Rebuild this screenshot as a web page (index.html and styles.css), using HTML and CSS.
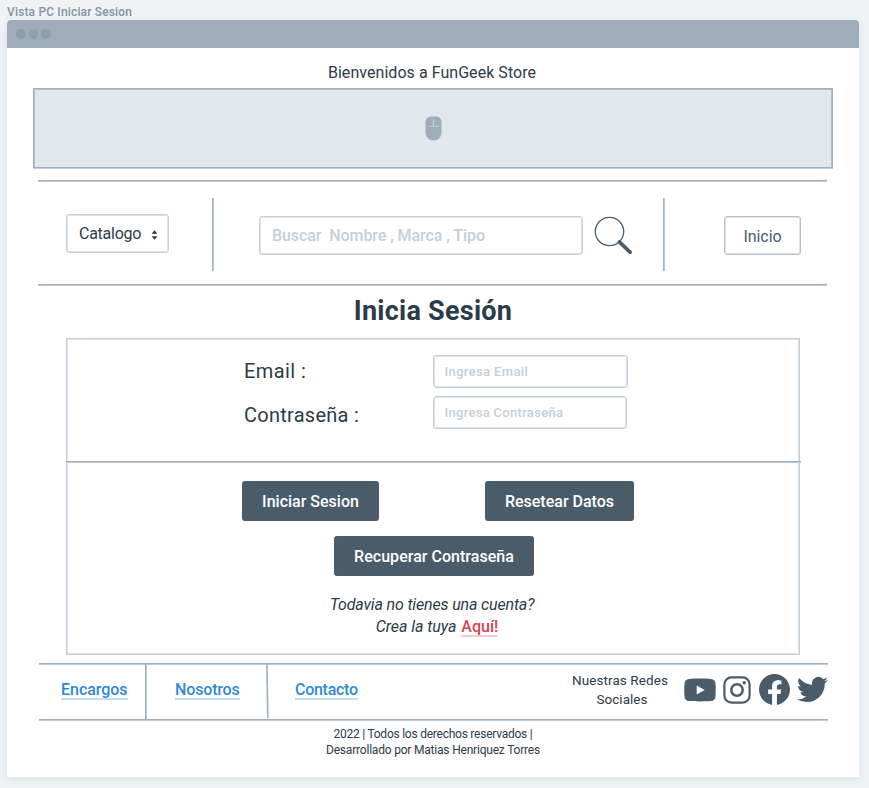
FILE: index.html
```
<!DOCTYPE html>
<html lang="es">
<head>
<meta charset="utf-8">
<title>Vista PC Iniciar Sesion</title>
<link rel="stylesheet" href="styles.css">
</head>
<body>
<div class="frame-title">Vista PC Iniciar Sesion</div>
<div class="window">
  <div class="titlebar"><i></i><i></i><i></i></div>
  <p class="welcome">Bienvenidos a FunGeek Store</p>
  <div class="banner">
    <svg width="17" height="25" viewBox="0 0 17 25"><path fill="#9eadb9" d="M6 .5h5a5.500 5.500 0 0 1 5.500 5.500v10.500a8 8 0 0 1-16 0V6A5.500 5.500 0 0 1 6 .5z"/><path d="M2.500 10.300h11.500M8.500 3v7" stroke="#c3cfd9" fill="none"/></svg>
  </div>
  <nav class="nav">
    <div class="select"><span>Catalogo</span><svg width="7" height="10" viewBox="0 0 7 10"><path fill="#2c3b48" d="M3.500.3 6.400 3.800H.6zM3.500 9.700 6.400 6.200H.6z"/></svg></div>
    <div class="rule rule-left"></div>
    <div class="search">Buscar&nbsp; Nombre , Marca , Tipo</div>
    <svg class="lens" width="38" height="38" viewBox="0 0 38 38" fill="none" stroke="#4a5c6a"><circle cx="15.500" cy="15.500" r="14.200" stroke-width="1.300"/><path d="M25.500 26 36 36.200" stroke-width="3.800" stroke-linecap="round"/></svg>
    <div class="rule rule-right"></div>
    <div class="home">Inicio</div>
  </nav>
  <h1>Inicia Sesión</h1>
  <section class="panel">
    <div class="fields">
      <label>Email :</label><div class="field">Ingresa Email</div>
      <label>Contraseña :</label><div class="field field-pass">Ingresa Contraseña</div>
    </div>
    <div class="actions">
      <div class="row">
        <div class="btn login">Iniciar Sesion</div>
        <div class="btn reset">Resetear Datos</div>
      </div>
      <div class="btn recover">Recuperar Contraseña</div>
      <p class="signup"><span class="ask">Todavia no tienes una cuenta?</span><br><span class="create">Crea la tuya</span> <a>Aquí!</a></p>
    </div>
  </section>
  <footer class="footer">
    <div class="cell cell-1"><a>Encargos</a></div>
    <div class="cell cell-2"><a>Nosotros</a><svg width="4" height="54" viewBox="0 0 4 54"><path d="M1.900 0 2.800 54" stroke="#a5b3c0" stroke-width="1.700"/></svg></div>
    <div class="cell cell-3"><a>Contacto</a></div>
    <p class="social-label"><span>Nuestras Redes</span><br><span class="l2">Sociales</span></p>
    <div class="social">
      <svg class="yt" width="32" height="24" viewBox="0 0 32 24"><path fill="#4a5c6a" fill-rule="evenodd" d="M5 .9C10 .4 22 .4 27 .9c3 .3 4.200 1.900 4.500 4.600.3 4 .3 9 0 13-.3 2.700-1.500 4.300-4.500 4.600-5 .4-17 .4-22 0-3-.3-4.200-1.900-4.500-4.600-.3-4-.3-9 0-13C.8 2.800 2 1.200 5 .9zM12.700 7.500v9l8-4.500z"/></svg>
      <svg class="ig" width="28" height="28" viewBox="0 0 28 28" fill="none" stroke="#4a5c6a"><rect x="1.400" y="1.400" width="25.200" height="25.200" rx="7" stroke-width="2.200"/><circle cx="14" cy="14" r="5.700" stroke-width="2.500"/><circle cx="21.200" cy="6.800" r="1.700" fill="#4a5c6a" stroke="none"/></svg>
      <svg class="fb" width="31" height="31" viewBox="0 0 24 24"><path fill="#4a5c6a" d="M24 12.073c0-6.627-5.373-12-12-12s-12 5.373-12 12c0 5.990 4.388 10.954 10.125 11.854v-8.385H7.078v-3.470h3.047V9.430c0-3.007 1.792-4.669 4.533-4.669 1.312 0 2.686.235 2.686.235v2.953H15.830c-1.491 0-1.956.925-1.956 1.874v2.250h3.328l-.532 3.470h-2.796v8.385C19.612 23.027 24 18.062 24 12.073z"/></svg>
      <svg class="tw" width="31" height="31" viewBox="0 0 24 24"><path fill="#4a5c6a" d="M23.953 4.570a10 10 0 01-2.825.775 4.958 4.958 0 002.163-2.723c-.951.555-2.005.959-3.127 1.184a4.920 4.920 0 00-8.384 4.482C7.690 8.095 4.067 6.130 1.640 3.162a4.822 4.822 0 00-.666 2.475c0 1.710.870 3.213 2.188 4.096a4.904 4.904 0 01-2.228-.616v.060a4.923 4.923 0 003.946 4.827 4.996 4.996 0 01-2.212.085 4.936 4.936 0 004.604 3.417 9.867 9.867 0 01-6.102 2.105c-.390 0-.779-.023-1.170-.067a13.995 13.995 0 007.557 2.209c9.053 0 13.998-7.496 13.998-13.985 0-.210 0-.420-.015-.630A9.935 9.935 0 0024 4.590z"/></svg>
    </div>
  </footer>
  <p class="legal"><span class="rights">2022 | Todos los derechos reservados |</span><br><span>Desarrollado por Matias Henriquez Torres</span></p>
</div>
</body>
</html>
```
FILE: styles.css
```
* { box-sizing: border-box; }
body {
  margin: 0;
  padding-left: 7px;
  height: 788px;
  overflow: hidden;
  background: #eff3f6;
  color: #2c3b48;
  font: 400 16px/20px Roboto, sans-serif;
  white-space: nowrap;
}
p, h1 { margin: 0; }
svg { display: block; flex: none; }

.frame-title {
  height: 20px;
  padding-top: 2px;
  font-size: 12px;
  font-weight: 500;
  letter-spacing: .16px;
  color: #8293a2;
}
.window {
  width: 852px;
  height: 757px;
  background: #fff;
  border-radius: 4px 4px 0 0;
  box-shadow: 0 2px 8px rgba(60, 90, 110, .12);
}
.titlebar {
  display: flex;
  align-items: center;
  gap: 3px;
  height: 28px;
  padding-left: 9px;
  background: #9eadb9;
  border-radius: 4px 4px 0 0;
}
.titlebar i { width: 9.700px; height: 9.700px; border-radius: 50%; background: #8d9eac; }
.welcome { height: 40px; padding: 15px 2px 0 0; text-align: center; letter-spacing: .05px; }
.banner {
  display: flex;
  align-items: center;
  justify-content: center;
  height: 80px;
  margin: 0 26px;
  border: 1px solid #9fafbd;
  box-shadow: inset 1px 1px #b1bfcb, inset -1px 0 #b1bfcb, 0 1px #c3cdd6;
  background: #e2e7eb;
}

.nav {
  display: flex;
  align-items: flex-start;
  width: 789px;
  height: 105px;
  margin: 12px 0 0 31px;
  padding: 17px 0 0 28px;
  border: solid #a0b0be;
  border-width: 1px 0;
  box-shadow: inset 0 1px #bcc8d2, 0 1px #bcc8d2;
}
.select, .search, .home, .field {
  border: 1px solid #c6d0da;
  border-radius: 3px;
  box-shadow: inset 0 0 0 1px #dde4e9;
}
.select {
  display: flex;
  align-items: center;
  justify-content: space-between;
  width: 103px;
  height: 39px;
  margin-top: 16px;
  padding: 1px 10px 0 12px;
}
.select span { letter-spacing: -.25px; }
.select svg { margin-top: 1px; }
.rule { width: 2px; height: 73px; background: linear-gradient(90deg, #a0b0be 50%, #bcc8d2 50%); }
.rule-left { margin-left: 43px; }
.search {
  width: 324px;
  height: 39px;
  margin: 18px 11px 0 45px;
  padding: 9px 0 0 12px;
  font-weight: 500;
  letter-spacing: -.07px;
  color: #c3cfd9;
}
.lens { margin-top: 18px; }
.rule-right { margin-left: 31px; }
.home {
  width: 77px;
  height: 39px;
  margin: 18px 0 0 59px;
  padding-top: 10px;
  border-color: #b5c0ca;
  text-align: center;
  letter-spacing: -.08px;
  color: #4a5c6a;
}

h1 {
  height: 53px;
  padding: 16px 0 0 0;
  text-align: center;
  font-size: 27px;
  line-height: 20px;
  letter-spacing: .24px;
}
.panel {
  width: 734px;
  height: 317px;
  margin-left: 59px;
  border: 1px solid #c3ced8;
  box-shadow: inset 0 0 0 1px #dde4e9;
}
.fields {
  display: grid;
  grid-template-columns: 189px 195px;
  row-gap: 8px;
  width: 735px;
  height: 123px;
  padding: 16px 0 0 178px;
  margin-left: -1px;
  align-content: start;
  border-bottom: 1px solid #a0b0be;
  box-shadow: 0 1px #bcc8d2;
}
.fields label { padding-top: 6px; font-size: 20px; letter-spacing: .42px; }
.fields label:nth-of-type(2) { padding-top: 9px; letter-spacing: .26px; }
.field {
  height: 33px;
  padding: 6px 0 0 10.500px;
  font-size: 13px;
  font-weight: 500;
  letter-spacing: .36px;
  color: #c3cfd9;
}
.field-pass { width: 194px; letter-spacing: .3px; }
.actions { padding: 19px 0 0 175px; }
.row { display: flex; gap: 106px; }
.btn {
  height: 39.500px;
  padding-top: 10.500px;
  border-radius: 3px;
  background: #4a5c6a;
  color: #fff;
  font-weight: 500;
  text-align: center;
}
.login { width: 137px; }
.reset { width: 149px; }
.recover { width: 200px; margin: 15.500px 0 0 92px; letter-spacing: .03px; }
.signup { width: 380px; margin-top: 18.500px; text-align: center; line-height: 22px; }
.ask, .create { font-style: italic; }
.ask { letter-spacing: -.15px; }
.create { margin: 0 1px 0 10px; letter-spacing: -.05px; }
.signup a {
  display: inline-block;
  height: 21px;
  border-bottom: 2px solid #f5c9d0;
  font-weight: 500;
  letter-spacing: 0;
  color: #d9415b;
}

.footer {
  display: flex;
  width: 789px;
  height: 57px;
  margin: 8px 0 0 32px;
  border: solid #a0b0be;
  border-width: 1px 0;
  box-shadow: inset 0 1px #bcc8d2, 0 1px #bcc8d2;
}
.cell { display: flex; align-items: flex-start; height: 55px; padding-top: 15px; }
.cell a {
  height: 21px;
  border-bottom: 2px solid #c3ddf4;
  font-weight: 500;
  line-height: 21px;
  color: #2f88d6;
}
.cell-1 { width: 107px; padding-left: 22px; border-right: 1px solid #a0b0be; box-shadow: 1px 0 #bcc8d2; }
.cell-1 a { letter-spacing: -.03px; }
.cell-2 { width: 123px; padding-left: 29px; justify-content: space-between; }
.cell-2 a { letter-spacing: -.15px; }
.cell-2 svg { margin-top: -15px; }
.cell-3 { width: 303px; padding-left: 26px; }
.cell-3 a { letter-spacing: -.28px; }
.social-label {
  width: 96px;
  padding-top: 7px;
  text-align: center;
  font-size: 13.500px;
  line-height: 19px;
  letter-spacing: .08px;
}
.social-label .l2 { letter-spacing: 0; padding-left: 4px; }
.social { display: flex; align-items: center; padding: 0 0 4px 16px; }
.ig { margin-left: 7px; }
.fb { margin-left: 8px; }
.tw { margin-left: 7px; }
.legal {
  padding-top: 6px;
  text-align: center;
  font-size: 12px;
  line-height: 16px;
  letter-spacing: -.2px;
}
.legal .rights { letter-spacing: -.24px; }
```
